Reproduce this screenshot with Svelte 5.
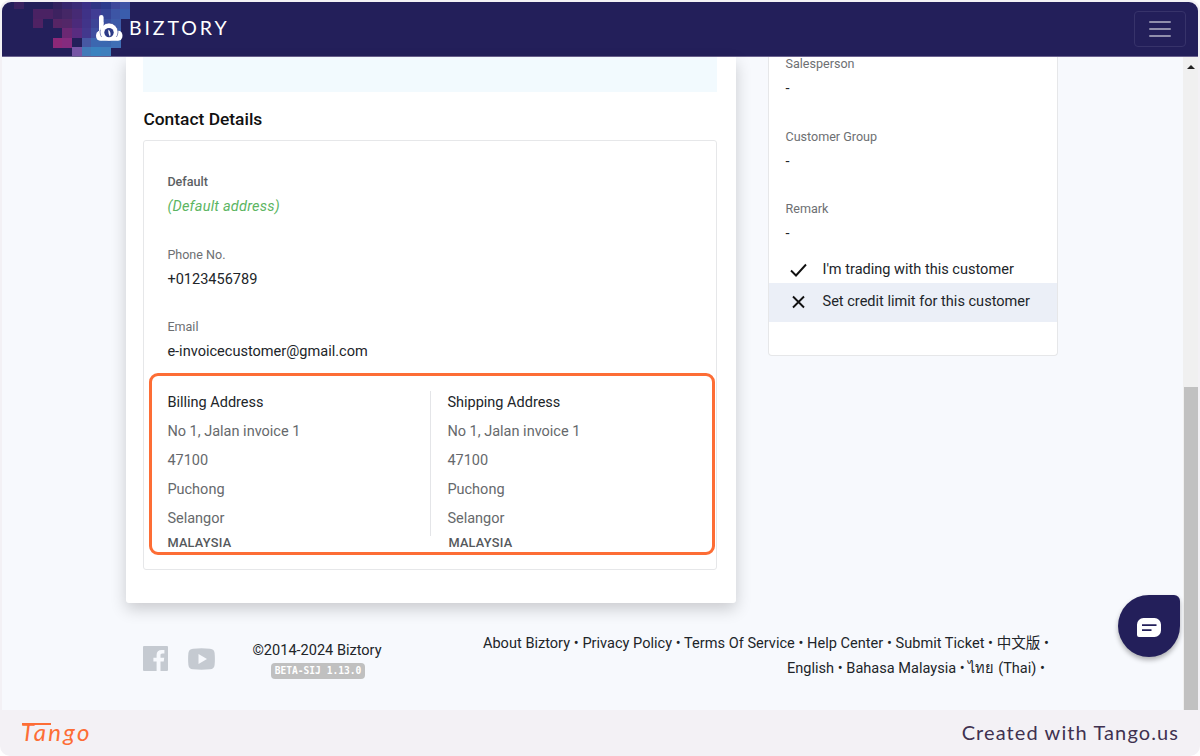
<script>
  const fields = [
    { label: 'Default', value: '(Default address)', kind: 'default' },
    { label: 'Phone No.', value: '+0123456789', kind: '' },
    { label: 'Email', value: 'e-invoicecustomer@gmail.com', kind: '' },
  ];

  const addresses = [
    { title: 'Billing Address', lines: ['No 1, Jalan invoice 1', '47100', 'Puchong', 'Selangor'], country: 'MALAYSIA' },
    { title: 'Shipping Address', lines: ['No 1, Jalan invoice 1', '47100', 'Puchong', 'Selangor'], country: 'MALAYSIA' },
  ];

  const info = ['Salesperson', 'Customer Group', 'Remark'];

  const linkRows = [
    ['About Biztory', 'Privacy Policy', 'Terms Of Service', 'Help Center', 'Submit Ticket', '中文版'],
    ['English', 'Bahasa Malaysia', 'ไทย (Thai)'],
  ];

  // [column, row, colour] on the mosaic grid behind the logo
  const mosaic = [
    [0, 0, '#3a2260'], [4, 0, '#33225f'], [5, 0, '#37266d'], [6, 0, '#3b2b77'], [7, 0, '#3c2f86'], [8, 0, '#2f3484'], [9, 0, '#2c3a8c'], [10, 0, '#3f479b'], [11, 0, '#3f55a5'],
    [2, 1, '#4a2263'], [3, 1, '#4a2263'], [4, 1, '#3d2260'], [5, 1, '#452766'], [6, 1, '#462a74'], [7, 1, '#3f3287'], [8, 1, '#413d94'], [9, 1, '#364496'], [10, 1, '#3d55a5'], [11, 1, '#3a5dac'],
    [2, 2, '#4f2263'], [4, 2, '#562565'], [5, 2, '#532768'], [6, 2, '#4b2a7a'], [7, 2, '#413489'], [8, 2, '#3d4596'], [9, 2, '#3a4f9f'], [10, 2, '#3d5ba8'],
    [5, 3, '#6b2873'], [6, 3, '#592c80'], [7, 3, '#43388d'], [8, 3, '#3f4f9f'], [9, 3, '#3c58a6'], [10, 3, '#3b62ae'],
    [4, 4, '#8c2878'], [5, 4, '#852b7e'], [7, 4, '#4758a3'], [8, 4, '#3c67b0'], [9, 4, '#3a68b0'], [10, 4, '#3f6fb5'],
    [6, 5, '#7655a5'], [7, 5, '#427ab8'], [8, 5, '#3a82bf'], [9, 5, '#3f7fbd'],
  ];
</script>

<div class="frame">
  <div class="screen">
    <header>
      <div class="brand">
        <svg class="logo" width="128" height="54" viewBox="0 0 128 54">
          <g shape-rendering="crispEdges">
            {#each mosaic as [col, row, color]}
              <rect x={12 + col * 9.67} y={row * 9.6 - 2.6} width="9.8" height="9.8" fill={color} />
            {/each}
          </g>
          <g fill="#fff">
            <ellipse cx="98" cy="33.800" rx="4" ry="5" />
            <ellipse cx="116.500" cy="33.800" rx="4" ry="5" />
            <path d="M97 15.200a2.300 2.300 0 0 1 4.600 0V31H97z" />
            <circle cx="107" cy="30" r="9" stroke="#35408f" stroke-width=".6" />
            <path d="M97.200 20h4.200v8h-3z" />
            <rect x="98" y="35" width="18.500" height="3.800" rx="1.500" />
          </g>
          <circle cx="107" cy="30.600" r="4.700" fill="#2c3a86" />
          <path d="M106.400 27.500c2 1.500 2.800 4.500 1.600 7.200-1.200-1.600-2-4.600-1.600-7.200z" fill="#fff" />
        </svg>
        <span class="wordmark">BIZTORY</span>
      </div>
      <button class="toggler" aria-label="Menu">
        <i></i><i></i><i></i>
      </button>
    </header>

    <div class="viewport">
      <div class="page">
        <main>
          <section class="card contact">
            <div class="notice"></div>
            <h2>Contact Details</h2>
            <div class="details">
              {#each fields as field}
                <div class="field {field.kind}">
                  <span class="label">{field.label}</span>
                  <span class="value">{field.value}</span>
                </div>
              {/each}
              <div class="addresses">
                {#each addresses as address}
                  <div class="address">
                    <div class="lines">
                      <h3>{address.title}</h3>
                      {#each address.lines as line}
                        <p>{line}</p>
                      {/each}
                    </div>
                    <strong>{address.country}</strong>
                  </div>
                {/each}
              </div>
            </div>
          </section>

          <aside class="card side">
            {#each info as label}
              <div class="field">
                <span class="label">{label}</span>
                <span class="value">-</span>
              </div>
            {/each}
            <div class="option">
              <svg width="18" height="16" viewBox="0 0 18 16"><path d="M1 8.500l5 5L16 2.500" /></svg>
              I'm trading with this customer
            </div>
            <div class="option shaded">
              <svg width="18" height="16" viewBox="0 0 18 16"><path d="M3 2.500l11 11M14 2.500l-11 11" /></svg>
              Set credit limit for this customer
            </div>
          </aside>
        </main>

        <footer>
          <div class="social">
            <svg width="25" height="25" viewBox="0 0 25 25">
              <path fill="#c5cad1" d="M1 0h23a1 1 0 0 1 1 1v23a1 1 0 0 1-1 1h-6.500v-9.500h3.200l.5-3.800h-3.700V9.300c0-1.100.4-1.800 1.900-1.800h2V4.100c-.4 0-1.500-.1-2.900-.1-2.900 0-4.900 1.700-4.900 5v2.700h-3.200v3.800h3.200V25H1a1 1 0 0 1-1-1V1a1 1 0 0 1 1-1z" />
            </svg>
            <svg width="27" height="22" viewBox="0 0 27 22">
              <path fill="#c5cad1" fill-rule="evenodd" d="M5 .7Q13.500-.2 22 .7c3 .2 4.500 2 4.600 4.300.4 4 .4 8 0 12-.3 2.800-1.600 4.100-4.600 4.300q-8.500.9-17 0c-3-.2-4.300-1.500-4.600-4.300-.4-4-.4-8 0-12C.7 2.700 2 .9 5 .7zM10.500 6v10l8.500-5z" />
            </svg>
          </div>
          <div class="copyright">
            <span>©2014-2024 Biztory</span>
            <code>BETA-SIJ 1.13.0</code>
          </div>
          <nav>
            {#each linkRows as row}
              <div class="links">
                {#each row as link}
                  <a href="#top">{link}</a>{' • '}
                {/each}
              </div>
            {/each}
          </nav>
        </footer>
      </div>

      <div class="scrollbar">
        <svg width="8" height="4" viewBox="0 0 8 4"><path d="M0 4l4-4 4 4z" fill="#222" /></svg>
        <div class="thumb"></div>
      </div>
    </div>

    <div class="highlight"></div>
    <button class="chat" aria-label="Chat">
      <svg width="24" height="19" viewBox="0 0 24 19">
        <path d="M6.500 0h11A6.500 6.500 0 0 1 24 6.500v6a6.500 6.500 0 0 1-6.500 6.500H2a2 2 0 0 1-2-2V6.500A6.500 6.500 0 0 1 6.500 0z" fill="#fff" />
        <path d="M5 7.200h14.500M5 12.200h9.500" stroke="#231f5a" stroke-width="1.700" />
      </svg>
    </button>
  </div>

  <div class="credit">
    <span class="tango">Tango</span>
    <span class="created">Created with Tango.us</span>
  </div>
</div>

<style>
  :global(body) {
    margin: 0;
    background: #fff;
  }

  .frame {
    box-sizing: border-box;
    width: 1200px;
    height: 756px;
    padding: 2px 2px 0;
    border-radius: 10px;
    background: #f3f1f5;
    font-family: Roboto, 'Noto Sans CJK SC', sans-serif;
    font-size: 14.55px;
    color: #212529;
    overflow: hidden;
  }

  .screen {
    position: relative;
    height: 708px;
    border-radius: 9px 9px 0 0;
    background: #f7f9fd;
    overflow: hidden;
  }

  header {
    box-sizing: border-box;
    height: 55px;
    display: flex;
    align-items: center;
    justify-content: space-between;
    padding-right: 12px;
    background: #231f5a;
    border-bottom: 1px solid #6b628f;
  }

  .brand {
    display: flex;
    align-items: center;
  }

  .wordmark {
    margin: -3px 0 0 -1px;
    font-family: Lato, sans-serif;
    font-size: 19.5px;
    letter-spacing: 2.9px;
    color: #fff;
  }

  .toggler {
    box-sizing: border-box;
    width: 52px;
    height: 36px;
    margin-top: -1px;
    padding: 0;
    display: flex;
    flex-direction: column;
    align-items: center;
    justify-content: center;
    gap: 5px;
    border: 1px solid #37336a;
    border-radius: 4px;
    background: none;
  }

  .toggler i {
    width: 22px;
    height: 2px;
    border-radius: 1px;
    background: #918fac;
  }

  .viewport {
    height: 653px;
    display: flex;
  }

  .page {
    flex: 1;
    padding-left: 124px;
  }

  main {
    height: 546px;
    display: flex;
    align-items: flex-start;
    gap: 32px;
  }

  .card {
    box-sizing: border-box;
    background: #fff;
  }

  .contact {
    width: 610px;
    height: 546px;
    padding: 0 18.6px 0 17.4px;
    border-radius: 0 0 3px 3px;
    box-shadow: 0 6px 16px rgba(0, 0, 0, 0.19);
  }

  .notice {
    height: 35px;
    background: #f2fafe;
  }

  h2 {
    margin: 16px 0 9px;
    font-size: 17.4px;
    font-weight: 500;
    line-height: 23px;
    color: #111;
  }

  .details {
    box-sizing: border-box;
    height: 430px;
    padding: 29px 23px 0;
    border: 1px solid #e6e7e9;
    border-radius: 3px;
  }

  .field {
    height: 72.6px;
    display: flex;
    flex-direction: column;
  }

  .label {
    font-size: 12.55px;
    line-height: 24px;
    color: #6d6f72;
  }

  .value {
    margin-top: 1px;
    line-height: 24px;
  }

  .default .label {
    font-weight: 500;
    color: #5c5f63;
  }

  .default .value {
    font-style: italic;
    letter-spacing: 0.22px;
    color: #5cb562;
  }

  .addresses {
    display: flex;
    margin-top: 3px;
  }

  .address {
    width: 263px;
  }

  .lines {
    box-sizing: border-box;
    height: 145px;
    padding-top: 1px;
  }

  .address + .address .lines {
    padding-left: 16px;
    border-left: 1px solid #e4e5e8;
  }

  h3,
  p {
    margin: 0;
    padding-bottom: 8px;
    font-size: 14.5px;
    font-weight: 400;
    line-height: 21px;
  }

  p {
    color: #66696c;
  }

  strong {
    display: block;
    font-size: 12.75px;
    font-weight: 500;
    line-height: 14px;
    letter-spacing: 0.25px;
    color: #55585b;
  }

  .address + .address strong {
    padding-left: 18px;
  }

  .side {
    width: 290px;
    height: 299px;
    border: 1px solid #e6e7e9;
    border-top: 0;
    border-radius: 0 0 4px 4px;
  }

  .side .field {
    padding-left: 16.5px;
  }

  .side .field:first-child {
    margin-top: -5px;
  }

  .option {
    height: 25px;
    margin-top: -12px;
    padding-left: 21px;
    display: flex;
    gap: 14.5px;
    line-height: 24px;
  }

  .option svg {
    margin-top: 4px;
    fill: none;
    stroke: #111;
    stroke-width: 1.9;
  }

  .shaded {
    box-sizing: border-box;
    height: 39px;
    margin-top: 0;
    padding-top: 7px;
    background: #ebeff7;
  }

  footer {
    display: flex;
    align-items: flex-start;
    padding: 27px 0 0 16.5px;
  }

  .social {
    display: flex;
    align-items: center;
    gap: 20px;
    margin-top: 16px;
    width: 109.5px;
  }

  .copyright {
    width: 130px;
    display: flex;
    flex-direction: column;
    align-items: center;
    padding-top: 11px;
    white-space: nowrap;
    line-height: 20px;
  }

  code {
    margin: 2px 0 0 2px;
    padding: 0 4px;
    border-radius: 4px;
    background: #c0c0c0;
    color: #fff;
    font: bold 9.6px/16px 'DejaVu Sans Mono', monospace;
  }

  nav {
    width: 667px;
    padding-top: 1px;
    text-align: right;
    line-height: 25px;
    word-spacing: 0.1px;
  }

  a {
    color: inherit;
    text-decoration: none;
  }

  .links + .links {
    margin-right: 4px;
  }

  .scrollbar {
    width: 15px;
    display: flex;
    flex-direction: column;
    align-items: center;
    justify-content: space-between;
    background: #f0f0f0;
  }

  .scrollbar svg {
    margin-top: 8px;
  }

  .thumb {
    width: 14px;
    height: 323px;
    background: #c1c1c1;
  }

  .highlight {
    position: absolute;
    left: 147px;
    top: 371px;
    box-sizing: border-box;
    width: 566px;
    height: 182px;
    border: 3px solid #fd6d35;
    border-radius: 9px;
  }

  .chat {
    position: absolute;
    left: 1116px;
    top: 593px;
    width: 62px;
    height: 62px;
    padding: 2px 0 0;
    display: flex;
    align-items: center;
    justify-content: center;
    border: 0;
    border-radius: 50% 6px 50% 50%;
    background: #231f5a;
    box-shadow: 0 3px 5px rgba(0, 0, 0, 0.3);
  }

  .credit {
    box-sizing: border-box;
    height: 46px;
    display: flex;
    align-items: center;
    justify-content: space-between;
    padding: 0 19px 3px;
  }

  .tango {
    position: relative;
    font-family: Lato, sans-serif;
    font-size: 24px;
    font-style: italic;
    letter-spacing: 2.3px;
    color: #fd6d35;
  }

  /* long crossbar of the T */
  .tango::before {
    content: '';
    position: absolute;
    left: 1px;
    top: 6px;
    width: 29px;
    height: 2px;
    background: #fd6d35;
  }

  .created {
    font-family: Lato, sans-serif;
    font-size: 20px;
    letter-spacing: 1.1px;
    color: #3f3150;
  }
</style>
